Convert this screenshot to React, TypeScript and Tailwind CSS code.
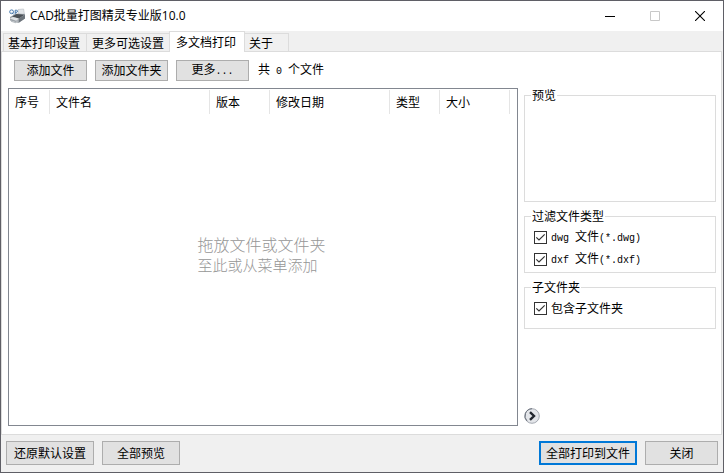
import React from "react"

interface PushButtonProps {
  children: React.ReactNode
  className?: string
}

interface CheckOptionProps {
  id: string
  children: React.ReactNode
}

interface GroupProps {
  title: string
  className?: string
  children?: React.ReactNode
}

const tabs = [
  {label: "基本打印设置", className: "mt-[2px] h-[18px] w-[83px] border-r-0 bg-[#f0f0f0] pl-1"},
  {label: "更多可选设置", className: "mt-[2px] h-[18px] w-[83px] border-r-0 bg-[#f0f0f0] pl-[5px]"},
  {
    label: "多文档打印",
    className: "relative z-10 -mb-px h-[21px] w-[76px] bg-white pl-[6px]",
    active: true,
  },
  {label: "关于", className: "mt-[2px] h-[18px] w-11 border-l-0 bg-[#f0f0f0] pl-1"},
]

const columns = [
  {label: "序号", className: "w-[41px]"},
  {label: "文件名", className: "w-[160px]"},
  {label: "版本", className: "w-[60px]"},
  {label: "修改日期", className: "w-[120px]"},
  {label: "类型", className: "w-[50px]"},
  {label: "大小", className: "w-[70px]"},
]

// half-width characters next to the full-width ones
const Half: React.FC<{children: React.ReactNode}> = ({children}) => (
  <span className="font-['Liberation_Mono',monospace] text-[10px] whitespace-pre">{children}</span>
)

const PushButton: React.FC<PushButtonProps> = ({children, className}) => (
  <button
    className={`bg-[#e1e1e1] text-center whitespace-nowrap ${className}`}
    type="button"
  >
    {children}
  </button>
)

const CheckOption: React.FC<CheckOptionProps> = ({id, children}) => (
  <div className="flex h-[22px] items-center gap-1">
    <span className="grid h-[13px] w-[13px] shrink-0">
      <input
        defaultChecked
        className="col-start-1 row-start-1 h-[13px] w-[13px] appearance-none border border-[#333333] bg-white"
        id={id}
        type="checkbox"
      />
      <svg
        className="pointer-events-none col-start-1 row-start-1"
        fill="none"
        height="13"
        viewBox="0 0 13 13"
        width="13"
      >
        <path d="M2.3 6.3 5 9l5.7-5.7" stroke="#333" strokeWidth="1.2" />
      </svg>
    </span>
    <label className="whitespace-nowrap" htmlFor={id}>
      {children}
    </label>
  </div>
)

const Group: React.FC<GroupProps> = ({title, className, children}) => (
  <fieldset className={`min-w-0 border border-[#dcdcdc] px-[9px] ${className}`}>
    <legend className="-ml-[3px] h-4 px-px leading-4">{title}</legend>
    {children}
  </fieldset>
)

const PrinterIcon: React.FC = () => (
  <svg height="16" viewBox="0 0 16 16" width="16">
    <path d="M9 1.5 14.6 1l.8 5L10 7.5z" fill="#e3e6e9" stroke="#b9bec3" strokeWidth=".6" />
    <path d="m1 9 6-3.5 9 .5v4.5L9.5 15 1 12.5z" fill="#9da3a9" />
    <path d="M3 8.4 7.5 6l7.8.8L10 10.4z" fill="#4b5157" />
    <path d="m10 10.4 6-3.6v3.8L10 14.6z" fill="#6c737a" />
    <path d="m.8 10.6 3-1.6 6 1.6-2.6 2.2z" fill="#dfe2e5" />
    <path d="m2 12.6 4.4 1.3L9 12v1.4l-2.4 1.8L2 13.8z" fill="#b8bdc2" />
    <circle cx="2.6" cy="3.8" fill="none" r="1.9" stroke="#4779ad" />
    <path d="m3 4.6 1.6 1.8M6.2 6.3V2.2h1.6l.8.8-.6 1.3H6.2" fill="none" stroke="#4779ad" />
  </svg>
)

const TitleBar: React.FC = () => (
  <header className="flex h-[30px] shrink-0 items-center bg-white pl-2">
    <PrinterIcon />
    <h1 className="ml-[5px] flex-1 font-['Open_Sans','Noto_Sans_CJK_SC',sans-serif] text-[12px] leading-4">
      CAD批量打图精灵专业版10.0
    </h1>
    <button aria-label="最小化" className="flex h-full w-[46px] items-center justify-center" type="button">
      <svg height="10" viewBox="0 0 10 10" width="10">
        <path d="M0 5.5h10" stroke="#000" />
      </svg>
    </button>
    <button
      disabled
      aria-label="最大化"
      className="flex h-full w-11 items-center justify-center"
      type="button"
    >
      <svg fill="none" height="10" viewBox="0 0 10 10" width="10">
        <path d="M.5.5h9v9h-9z" stroke="#c8c8c8" />
      </svg>
    </button>
    <button aria-label="关闭窗口" className="flex h-full w-[46px] items-center justify-center" type="button">
      <svg fill="none" height="10" viewBox="0 0 10 10" width="10">
        <path d="m0 0 10 10M10 0 0 10" stroke="#000" strokeWidth="1.1" />
      </svg>
    </button>
  </header>
)

const FileList: React.FC = () => (
  <div className="flex min-w-0 flex-1 flex-col border border-[#828790] bg-white pt-px">
    <table className="w-[501px] table-fixed border-separate border-spacing-0">
      <thead>
        <tr className="h-6">
          {columns.map((column) => (
            <th
              key={column.label}
              className={`border-r border-[#e5e5e5] p-0 pl-[6px] text-left font-normal ${column.className}`}
            >
              {column.label}
            </th>
          ))}
        </tr>
      </thead>
      <tbody />
    </table>
    <div className="flex flex-1 items-center justify-center pb-7 pr-[3px]">
      <p className="font-['Liberation_Sans','Noto_Sans_CJK_SC',sans-serif] font-light leading-5 text-[#969696]">
        <span className="block text-[16px]">拖放文件或文件夹</span>
        <span className="block text-[15px]">至此或从菜单添加</span>
      </p>
    </div>
  </div>
)

const App: React.FC = () => {
  return (
    <div className="flex min-h-screen flex-col border border-[#5f5f66] bg-[#f0f0f0] font-['Noto_Sans_CJK_SC',sans-serif] text-[12px] leading-4 text-black">
      <TitleBar />
      <nav className="flex h-5 shrink-0 pl-[2px]" role="tablist">
        {tabs.map((tab) => (
          <button
            key={tab.label}
            aria-selected={Boolean(tab.active)}
            className={`flex items-center border border-b-0 border-[#dcdcdc] whitespace-nowrap ${tab.className}`}
            role="tab"
            type="button"
          >
            {tab.label}
          </button>
        ))}
      </nav>
      <main className="mr-px flex flex-1 flex-col border border-[#dcdcdc] bg-white pb-2 pl-[6px] pr-[5px]">
        <div className="flex h-9 items-center gap-2 pl-[6px]">
          <PushButton className="h-[21px] w-[73px] border border-[#adadad]">添加文件</PushButton>
          <PushButton className="h-[21px] w-[73px] border border-[#adadad]">添加文件夹</PushButton>
          <PushButton className="h-[21px] w-[73px] border border-[#adadad]">
            更多<Half>...</Half>
          </PushButton>
          <p className="pl-px whitespace-nowrap">
            共<Half> 0 </Half>个文件
          </p>
        </div>
        <div className="flex flex-1 gap-[6px]">
          <FileList />
          <aside className="flex w-[192px] shrink-0 flex-col">
            <Group className="-mt-px h-[115px]" title="预览" />
            <Group className="mt-[6px] h-[65px]" title="过滤文件类型">
              <div className="pt-[2px]">
                <CheckOption id="dwg">
                  <Half>dwg </Half>文件<Half>(*.dwg)</Half>
                </CheckOption>
                <CheckOption id="dxf">
                  <Half>dxf </Half>文件<Half>(*.dxf)</Half>
                </CheckOption>
              </div>
            </Group>
            <Group className="mt-[6px] h-[50px]" title="子文件夹">
              <div className="pt-[2px]">
                <CheckOption id="subfolders">包含子文件夹</CheckOption>
              </div>
            </Group>
            <button aria-label="展开" className="mb-[2px] mt-auto h-4 w-4" type="button">
              <svg fill="none" height="16" viewBox="0 0 16 16" width="16">
                <circle cx="8" cy="8" fill="#e4e6ea" r="7.3" stroke="#a4a9b1" />
                <path d="M3 13A7.3 7.3 0 0 1 8 .7" stroke="#6b717c" />
                <path d="m6 4.2 4 3.8-4 3.8" stroke="#23272f" strokeWidth="2.4" />
              </svg>
            </button>
          </aside>
        </div>
      </main>
      <footer className="flex h-[37px] shrink-0 items-center gap-2 pb-px pl-[5px] pr-[5px]">
        <PushButton className="h-6 w-[88px] border border-[#adadad]">还原默认设置</PushButton>
        <PushButton className="h-6 w-[78px] border border-[#adadad]">全部预览</PushButton>
        <PushButton className="ml-auto h-6 w-[98px] border-2 border-[#0078d7]">
          全部打印到文件
        </PushButton>
        <PushButton className="h-6 w-[73px] border border-[#adadad]">关闭</PushButton>
      </footer>
    </div>
  )
}

export default App
